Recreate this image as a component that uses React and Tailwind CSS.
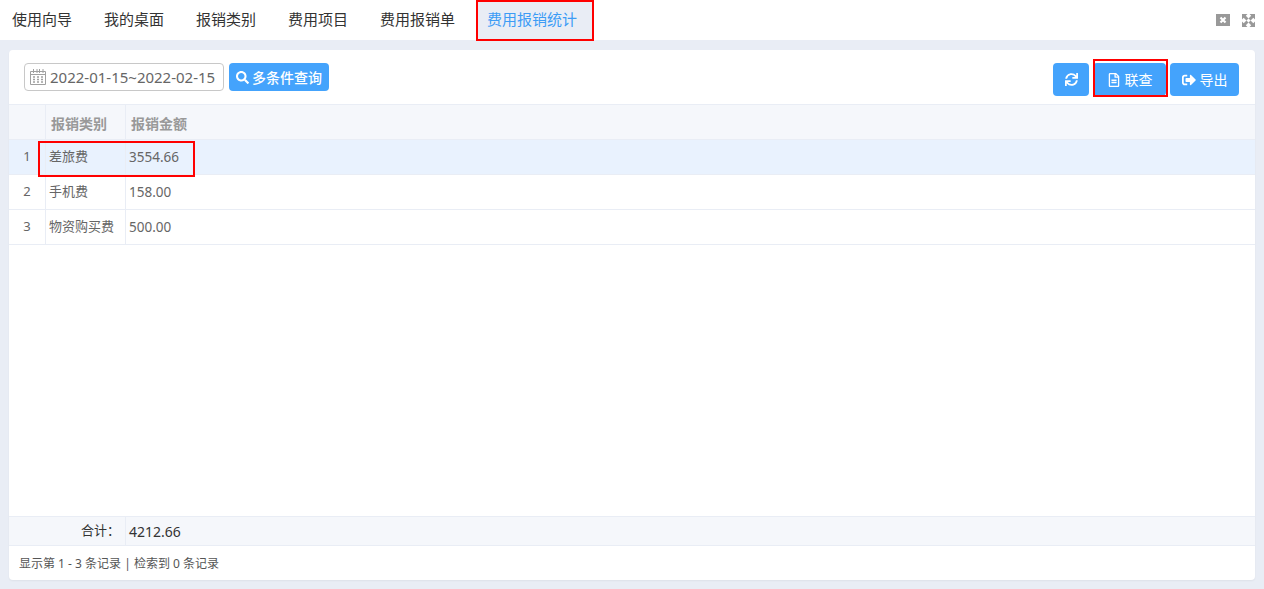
import { FaSearch, FaSync, FaRegFileAlt, FaSignOutAlt } from 'react-icons/fa'

const font = { fontFamily: '"Noto Sans", "Noto Sans CJK SC", sans-serif' }

const tabs = ['使用向导', '我的桌面', '报销类别', '费用项目', '费用报销单']

const rows = [
  { no: 1, name: '差旅费', amount: '3554.66', active: true },
  { no: 2, name: '手机费', amount: '158.00' },
  { no: 3, name: '物资购买费', amount: '500.00' },
]

function CalendarIcon() {
  return (
    <svg width="18" height="18" viewBox="0 0 18 18" fill="none" stroke="#a0a0a0" strokeWidth="1">
      <path d="M1.5 3.5h15v13h-15z" />
      <path d="M4.5 1v4M8 1v4M10.5 1v4M14 1v4M1.5 6.5h15" />
      <path d="M4 9h2M8 9h2M12 9h2M4 11.5h2M8 11.5h2M12 11.5h2M4 14h2M8 14h2M12 14h2" strokeWidth="1.5" />
    </svg>
  )
}

function CloseBox() {
  return (
    <svg width="14" height="14" viewBox="0 0 14 14">
      <rect width="14" height="12" y="1" fill="#999" />
      <path d="M4.5 4.5l5 5M9.5 4.5l-5 5" stroke="white" strokeWidth="2.2" />
    </svg>
  )
}

function ExpandIcon() {
  return (
    <svg width="13" height="13" viewBox="0 0 13 13" fill="#999">
      <path d="M0 0h5.5L3.8 1.7 6.5 4.4 4.4 6.5 1.7 3.8 0 5.5zM13 0v5.5l-1.7-1.7-2.7 2.7-2.1-2.1 2.7-2.7L7.5 0zM0 13V7.5l1.7 1.7 2.7-2.7 2.1 2.1-2.7 2.7L5.5 13zM13 13H7.5l1.7-1.7-2.7-2.7 2.1-2.1 2.7 2.7L13 7.5z" />
    </svg>
  )
}

export default function App() {
  return (
    <div style={font} className="relative flex h-[589px] flex-col overflow-hidden bg-[#e9edf5] text-[#333]">
      <div className="flex h-10 shrink-0 items-center bg-white">
        {tabs.map((tab, i) => (
          <div key={tab} className={`${i === 0 ? 'pl-3' : 'pl-4'} flex h-10 items-center pr-4 pb-[1px] text-[15px] whitespace-nowrap`}>
            {tab}
          </div>
        ))}
        <div className="ml-[5px] flex h-10 w-[118px] items-center bg-[#e9edf5] pb-[1px] pl-[11px] text-[15px] whitespace-nowrap text-[#3d9cf5]">
          费用报销统计
        </div>
        <div className="ml-auto flex items-center gap-3 pr-[9px]">
          <CloseBox />
          <ExpandIcon />
        </div>
      </div>

      <div className="mx-[9px] mt-[10px] flex h-[530px] flex-col overflow-hidden rounded bg-white shadow-[0_1px_2px_rgba(0,0,0,0.05)]">
        <div className="flex h-[55px] shrink-0 items-start border-b border-[#e9edf5] pl-[15px] pr-4">
          <div className="mt-[13px] flex h-7 w-[200px] items-center gap-[3px] rounded border border-[#c8c8c8] pl-1 text-[15px] whitespace-nowrap text-[#666]">
            <CalendarIcon />
            2022-01-15~2022-02-15
          </div>
          <button className="mt-[13px] ml-[5px] flex h-7 w-[100px] items-center justify-center gap-[3px] rounded bg-[#44a3fc] text-[14px] font-medium whitespace-nowrap text-white">
            <FaSearch size={13} />
            多条件查询
          </button>
          <div className="mt-[13px] ml-auto flex gap-1">
            <button className="flex h-[33px] w-9 items-center justify-center rounded-sm bg-[#44a3fc] text-white">
              <FaSync size={13} />
            </button>
            <button className="flex h-[33px] w-[73px] items-center justify-center gap-1 rounded-sm bg-[#44a3fc] text-[14px] text-white">
              <FaRegFileAlt size={14} />
              联查
            </button>
            <button className="flex h-[33px] w-[69px] items-center justify-center gap-1 rounded-sm bg-[#44a3fc] text-[14px] text-white">
              <FaSignOutAlt size={14} />
              导出
            </button>
          </div>
        </div>

        <div className="flex h-[35px] shrink-0 items-center border-b border-[#e9edf5] bg-[#f5f7fb] text-[14px] font-bold text-[#999]">
          <div className="h-full w-[37px] border-r border-[#e9edf5]" />
          <div className="flex h-full w-20 items-center border-r border-[#e9edf5] pt-[2px] pl-[5px]">报销类别</div>
          <div className="pt-[2px] pl-[5px]">报销金额</div>
        </div>

        {rows.map((row) => (
          <div
            key={row.no}
            className={`${row.active ? 'bg-[#e9f2fe]' : 'bg-white'} flex h-[35px] shrink-0 items-center border-b border-[#e9edf5] text-[13px] text-[#666]`}
          >
            <div className="flex h-full w-[37px] items-center justify-center border-r border-[#e9edf5]">{row.no}</div>
            <div className="flex h-full w-20 items-center border-r border-[#e9edf5] pb-[1px] pl-[3px]">{row.name}</div>
            <div className="pl-[3px] text-[13.5px]">{row.amount}</div>
          </div>
        ))}

        <div className="flex-1" />

        <div className="flex h-[30px] shrink-0 items-center border-y border-[#e9edf5] bg-[#f5f7fb] text-[#333]">
          <div className="flex h-full w-[117px] items-center justify-end border-r border-[#e9edf5] pr-[5px] text-[13px]">合计：</div>
          <div className="pl-[3px] text-[14px]">4212.66</div>
        </div>
        <div className="flex h-[34px] shrink-0 items-center pt-[1px] pl-[10px] text-[12px] text-[#555]">
          显示第 1 - 3 条记录 | 检索到 0 条记录
        </div>
      </div>

      {/* red annotation boxes drawn over the page */}
      <div className="absolute top-0 left-[476px] h-[41px] w-[118px] border-2 border-[#f00]" />
      <div className="absolute top-[59px] left-[1093px] h-[38px] w-[75px] border-2 border-[#f00]" />
      <div className="absolute top-[141px] left-[38px] h-[36px] w-[157px] border-2 border-[#f00]" />
    </div>
  )
}
